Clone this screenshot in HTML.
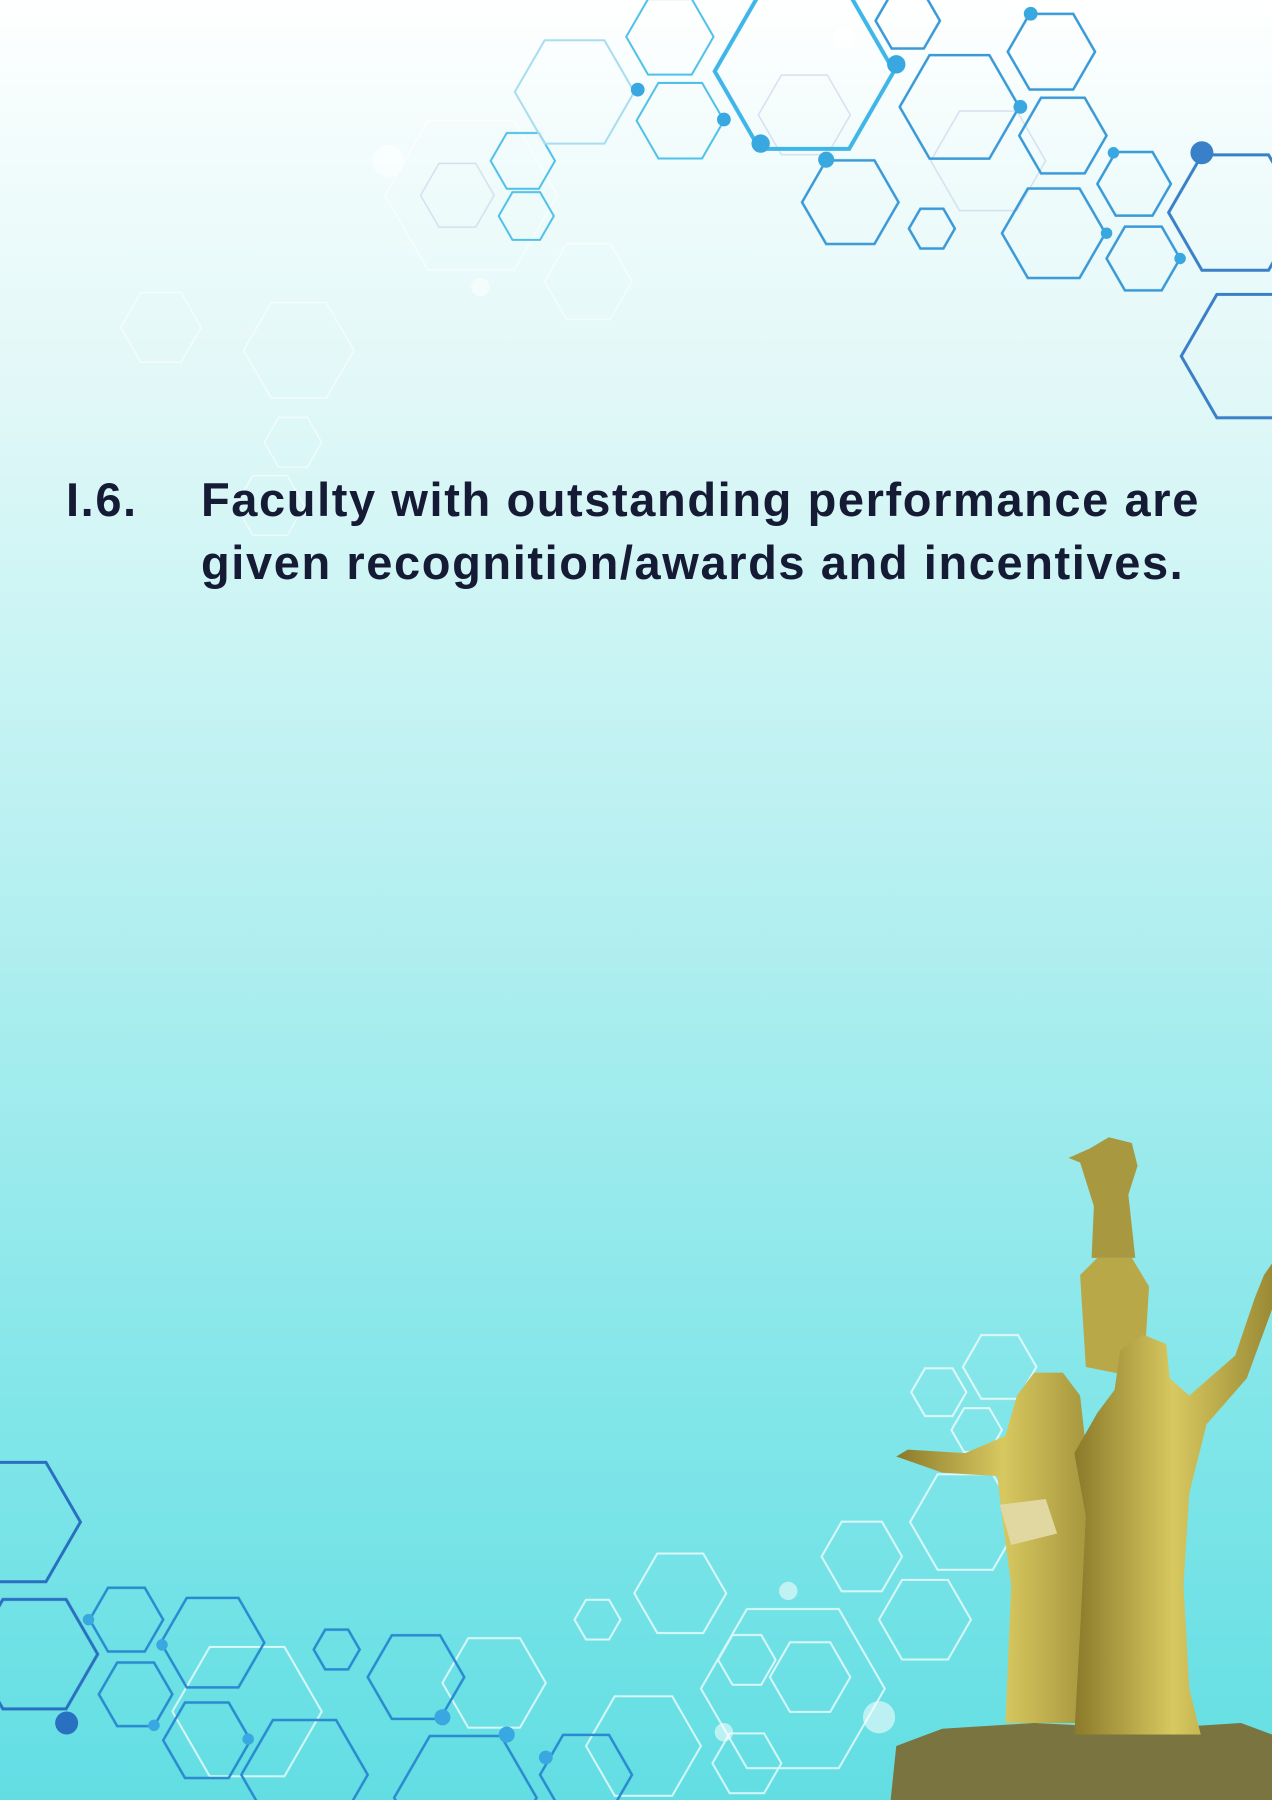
<!DOCTYPE html>
<html><head><meta charset="utf-8"><style>
html,body{margin:0;padding:0}
body{width:1272px;height:1800px;position:relative;overflow:hidden;
background:linear-gradient(180deg,#ffffff 0%,#f2fcfc 8%,#e4f8f8 20%,#d0f5f5 32%,#b8f0f1 48%,#9eebed 62%,#82e6e9 78%,#62dee3 100%);
font-family:"Liberation Sans",sans-serif}
svg{position:absolute;left:0;top:0}
.t{position:absolute;color:#151b34;font-size:47px;font-weight:bold;line-height:63px;letter-spacing:1.6px;white-space:nowrap;transform:scaleX(1.0);transform-origin:left top}
</style></head><body>
<svg width="1272" height="1800" viewBox="0 0 1107 1567" preserveAspectRatio="none">
<defs>
<polygon id="h" points="1,0 .5,.866 -.5,.866 -1,0 -.5,-.866 .5,-.866" vector-effect="non-scaling-stroke"/>
<linearGradient id="g" x1="0" y1="0" x2="1" y2="0"><stop offset="0" stop-color="#8a7a2a"/><stop offset=".5" stop-color="#d8c860"/><stop offset="1" stop-color="#9a8a35"/></linearGradient>
</defs>
<g fill="none" stroke-width="1.5">
<g stroke="#ffffff" opacity=".6">
<use href="#h" transform="translate(410,170) scale(75)"/>
<use href="#h" transform="translate(140,285) scale(35)"/>
<use href="#h" transform="translate(260,305) scale(48)"/>
<use href="#h" transform="translate(512,245) scale(38)"/>
<use href="#h" transform="translate(255,385) scale(25)"/>
<use href="#h" transform="translate(235,440) scale(30)"/>
</g>
<g stroke="#c8d4ea" opacity=".7">
<use href="#h" transform="translate(398,170) scale(32)"/>
<use href="#h" transform="translate(700,100) scale(40)"/>
<use href="#h" transform="translate(860,140) scale(50)"/>
</g>
<g stroke="#4fc0e8" stroke-width="2">
<use href="#h" transform="translate(583,32) scale(38)"/>
<use href="#h" transform="translate(592,105) scale(38)"/>
<use href="#h" transform="translate(455,140) scale(28)"/>
<use href="#h" transform="translate(458,188) scale(24)"/>
</g>
<use href="#h" stroke="#a8dcf0" stroke-width="2" transform="translate(500,80) scale(52)"/>
<use href="#h" stroke="#3fb6e8" stroke-width="4" transform="translate(700,62) scale(78)"/>
<g stroke="#3a9ad8" stroke-width="2.5">
<use href="#h" transform="translate(835,93) scale(52)"/>
<use href="#h" transform="translate(740,176) scale(42)"/>
<use href="#h" transform="translate(915,45) scale(38)"/>
<use href="#h" transform="translate(925,118) scale(38)"/>
<use href="#h" transform="translate(917,203) scale(45)"/>
<use href="#h" transform="translate(987,160) scale(32)"/>
<use href="#h" transform="translate(995,225) scale(32)"/>
<use href="#h" transform="translate(811,199) scale(20)"/>
<use href="#h" transform="translate(790,18) scale(28)"/>
</g>
<g stroke="#3a80c8" stroke-width="3">
<use href="#h" transform="translate(1075,185) scale(58)"/>
<use href="#h" transform="translate(1090,310) scale(62)"/>
</g>
<g stroke="#ffffff" stroke-width="2" opacity=".75">
<use href="#h" transform="translate(592,1387) scale(40)"/>
<use href="#h" transform="translate(520,1410) scale(20)"/>
<use href="#h" transform="translate(430,1465) scale(45)"/>
<use href="#h" transform="translate(560,1520) scale(50)"/>
<use href="#h" transform="translate(690,1470) scale(80)"/>
<use href="#h" transform="translate(705,1460) scale(35)"/>
<use href="#h" transform="translate(750,1355) scale(35)"/>
<use href="#h" transform="translate(840,1325) scale(48)"/>
<use href="#h" transform="translate(805,1410) scale(40)"/>
<use href="#h" transform="translate(870,1190) scale(32)"/>
<use href="#h" transform="translate(817,1212) scale(24)"/>
<use href="#h" transform="translate(850,1245) scale(22)"/>
<use href="#h" transform="translate(650,1445) scale(25)"/>
<use href="#h" transform="translate(650,1535) scale(30)"/>
<use href="#h" transform="translate(215,1490) scale(65)"/>
</g>
<g stroke="#2a70c0" stroke-width="3">
<use href="#h" transform="translate(10,1325) scale(60)"/>
<use href="#h" transform="translate(30,1440) scale(55)"/>
</g>
<g stroke="#2a8ad0" stroke-width="2.5">
<use href="#h" transform="translate(110,1410) scale(32)"/>
<use href="#h" transform="translate(185,1430) scale(45)"/>
<use href="#h" transform="translate(118,1475) scale(32)"/>
<use href="#h" transform="translate(180,1515) scale(38)"/>
<use href="#h" transform="translate(265,1545) scale(55)"/>
<use href="#h" transform="translate(293,1436) scale(20)"/>
<use href="#h" transform="translate(362,1460) scale(42)"/>
<use href="#h" transform="translate(405,1565) scale(62)"/>
<use href="#h" transform="translate(510,1545) scale(40)"/>
</g>
</g>
<g fill="#3aa8e0">
<circle cx="662" cy="125" r="8"/><circle cx="780" cy="56" r="8"/><circle cx="630" cy="104" r="6"/><circle cx="719" cy="139" r="7"/>
<circle cx="555" cy="78" r="6"/><circle cx="888" cy="93" r="6"/><circle cx="897" cy="12" r="6"/>
<circle cx="1046" cy="133" r="10" fill="#3a80c8"/><circle cx="969" cy="133" r="5"/><circle cx="963" cy="203" r="5"/><circle cx="1027" cy="225" r="5"/>
<circle cx="58" cy="1500" r="10" fill="#2a70c0"/><circle cx="77" cy="1410" r="5"/><circle cx="141" cy="1432" r="5"/><circle cx="134" cy="1502" r="5"/>
<circle cx="216" cy="1514" r="5"/><circle cx="385" cy="1495" r="7"/><circle cx="441" cy="1510" r="7"/><circle cx="475" cy="1530" r="6"/>
</g>
<g fill="#ffffff" opacity=".55">
<circle cx="338" cy="140" r="14"/><circle cx="735" cy="34" r="10"/><circle cx="765" cy="1495" r="14"/><circle cx="686" cy="1385" r="8"/><circle cx="630" cy="1508" r="8"/><circle cx="418" cy="250" r="8"/>
</g>
<path d="M775,1568 L780,1520 L820,1505 L900,1500 L1000,1505 L1080,1500 L1107,1510 L1107,1568Z" fill="#7a7440"/>
<path d="M945,1190 L940,1110 L955,1095 L985,1095 L1000,1120 L995,1200Z" fill="#b8a848"/>
<path d="M950,1095 L952,1050 L940,1012 L930,1008 L948,1000 L965,990 L985,995 L990,1015 L982,1040 L988,1095Z" fill="#a89840"/>
<path d="M875,1500 L880,1380 L872,1320 L868,1285 L820,1282 L780,1268 L790,1262 L840,1265 L875,1250 L885,1215 L900,1195 L925,1195 L940,1215 L945,1260 L960,1280 L955,1340 L965,1420 L960,1500Z" fill="url(#g)"/>
<path d="M935,1510 L940,1420 L945,1320 L935,1265 L955,1230 L970,1210 L975,1175 L995,1162 L1015,1170 L1018,1200 L1035,1215 L1075,1180 L1092,1130 L1100,1110 L1107,1100 L1107,1140 L1085,1200 L1050,1240 L1035,1300 L1030,1380 L1035,1470 L1045,1510Z" fill="url(#g)"/>
<path d="M870,1310 L910,1305 L920,1335 L880,1345Z" fill="#e0d8a0"/>
</svg>
<div class="t" style="left:66px;top:468px">I.6.</div>
<div class="t" style="left:201px;top:468px">Faculty with outstanding performance are<br>given recognition/awards and incentives.</div>
</body></html>
